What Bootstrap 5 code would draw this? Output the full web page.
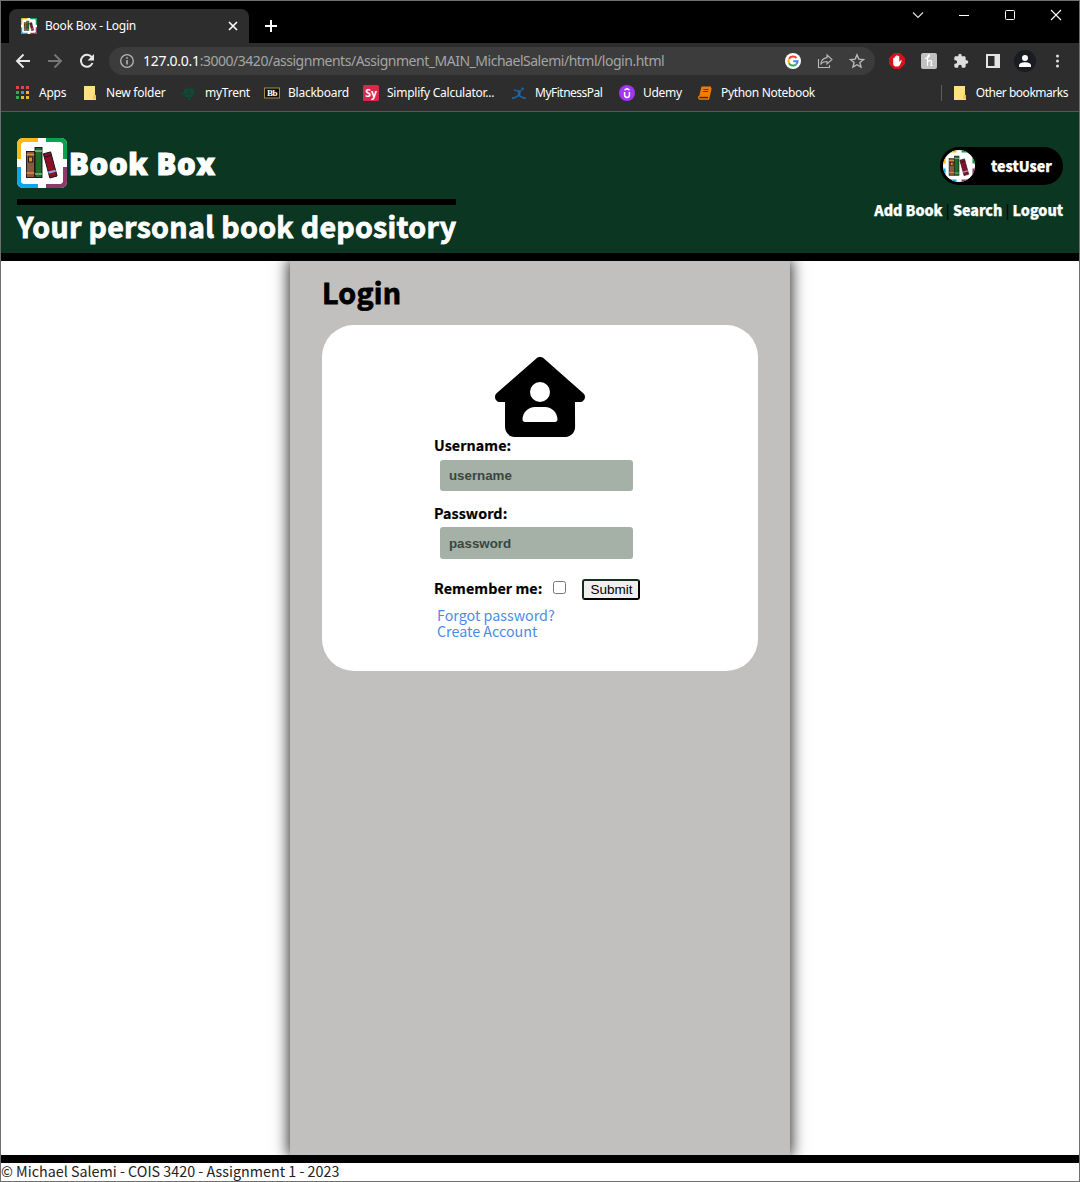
<!DOCTYPE html>
<html lang="en">
<head>
<meta charset="utf-8">
<title>Book Box - Login</title>
<link href="https://cdn.jsdelivr.net/npm/bootstrap@5.3.0/dist/css/bootstrap.min.css" rel="stylesheet">
<script src="https://cdn.jsdelivr.net/npm/bootstrap@5.3.0/dist/js/bootstrap.bundle.min.js"></script>
<style>
  body { margin: 0; background: #fff; color: #000; font-family: "Noto Sans CJK SC", "Noto Sans CJK JP", sans-serif; font-size: 14.3px; overflow: hidden; }
  svg { display: block; flex: none; }
  .win { width: 1080px; height: 1182px; border: 1px solid #6f6f6f; overflow: hidden; }
  .chrome-ui { font-family: "Noto Sans", "Open Sans", sans-serif; font-size: 12px; color: #fff; white-space: nowrap; }
  .tabstrip { height: 42px; background: #000; }
  .tab { width: 240px; height: 34px; margin: 8px 0 0 8px; background: #2d2d2d; border-radius: 8px 8px 0 0; padding: 0 10px 0 12px; }
  .tab-title { margin-left: 8px; letter-spacing: -.22px; }
  .newtab { margin: 19px 0 0 16px; }
  .winctl { gap: 34px; padding: 8px 17px 0 0; height: 20px; }
  .toolbar { height: 36px; background: #2d2d2d; }
  .nav-icons { gap: 16px; padding-left: 14px; width: 108px; }
  .omni { width: 766px; height: 28px; border-radius: 14px; background: #3c3c3c; padding: 0 10px; }
  .url { margin-left: 8px; font-size: 14px; line-height: 20px; margin-top: -1px; color: #a5a5a5; letter-spacing: -.48px; }
  .url b { color: #fff; font-weight: 400; letter-spacing: -.29px; }
  .ext { gap: 16px; margin-left: 14px; }
  .marks { height: 33px; background: #2d2d2d; border-bottom: 1px solid #55595a; padding-left: 14px; padding-bottom: 4px; letter-spacing: -.24px; }
  .bm { display: flex; align-items: center; gap: 8px; flex: none; }
  .w1 { width: 67px } .w2 { width: 99px } .w3 { width: 83px } .w4 { width: 99px } .w5 { width: 148px } .w6 { width: 108px; letter-spacing: -.5px } .w7 { width: 78px; letter-spacing: -.3px }
  .w8 { letter-spacing: -.32px }
  .others { margin-right: 11px; }
  .others .bm { margin-left: 10px; letter-spacing: -.48px; }
  .bm-sep { width: 1px; height: 16px; background: #5e5e5e; }
  .site-head { height: 149px; background: #0a3622; border-bottom: 8px solid #000; color: #fff; padding: 26px 16px 0; }
  .brand { font-family: "Open Sans", "Noto Sans", sans-serif; font-size: 29.5px; font-weight: 800; line-height: 52px; gap: 2px; height: 50px; }
  .brand-name { letter-spacing: .6px; -webkit-text-stroke: 1px #fff; }
  .rule { height: 6px; background: #000; margin-top: 11px; }
  .tagline { font-size: 28.6px; font-weight: 700; line-height: 36px; margin-top: 3px; white-space: nowrap; letter-spacing: .3px; -webkit-text-stroke: .8px #fff; }
  .userpill { margin-top: 9px; width: 123px; height: 38px; border-radius: 19px; background: #000; padding: 0 11px 0 3px; font-weight: 900; -webkit-text-stroke: .25px #fff; }
  .avatar { width: 32px; height: 32px; border-radius: 50%; overflow: hidden; }
  .links { margin-top: 13px; font-weight: 900; line-height: 23px; white-space: nowrap; letter-spacing: -.05px; -webkit-text-stroke: .25px #fff; }
  .links i { font-style: normal; font-weight: 400; color: #000; -webkit-text-stroke: 0; }
  .stage { height: 894px; overflow: hidden; }
  .panel { width: 500px; height: 894px; background: #c2c0be; box-shadow: 0 0 14px 2px rgba(0,0,0,.8); padding: 11px 32px 0; }
  .panel h1 { font-size: 28.6px; font-weight: 700; line-height: 40px; height: 40px; margin: 0 0 13px; letter-spacing: .25px; -webkit-text-stroke: .8px #000; }
  .login-card { height: 346px; border-radius: 32px; background: #fff; padding: 32px 112px 0; }
  .lbl { font-weight: 700; line-height: 16px; height: 18px; white-space: nowrap; letter-spacing: .08px; -webkit-text-stroke: .2px #000; }
  .remember { padding-bottom: 0; margin-bottom: 2px; }
  .field { display: block; width: 193px; border: 0; border-radius: 3px; background: #a5b0a6; margin-left: 6px; padding: 0 9px; font: bold 13.3px "Liberation Sans", Arial, sans-serif; }
  .field::placeholder { color: #38473e; opacity: 1; }
  .chk { width: 13px; height: 13px; margin: -5px 0 0 11px; border: 1px solid #767676; border-radius: 2.5px; background: #fff; appearance: none; }
  .go { width: 58px; height: 21px; margin-left: 16px; padding: 0; border: 2px solid #000; border-top-color: #12301c; border-left-color: #12301c; border-radius: 3px; background: #efefef; font: 13.5px/16px "Liberation Sans", Arial, sans-serif; }
  .more a { display: block; color: #4a8bea; text-decoration: none; line-height: 16px; }
  .foot { border-top: 8px solid #000; height: 27px; line-height: 16px; letter-spacing: .01px; color: #222; }
</style>
</head>
<body>
<svg width="0" height="0" class="position-absolute">
  <defs>
    <symbol id="books" viewBox="0 0 50 50">
      <clipPath id="rr"><rect width="50" height="50" rx="6"/></clipPath>
      <g clip-path="url(#rr)">
        <rect width="50" height="50" fill="#fff"/>
        <path d="M0 21V0h21v4H6L4 6v15z" fill="#fbb917"/>
        <path d="M29 0h21v21h-4V6l-2-2H29z" fill="#0aa24f"/>
        <path d="M0 29v21h21v-4H6l-2-2V29z" fill="#0ea5e9"/>
        <path d="M29 50h21V29h-4v15l-2 2H29z" fill="#8e3a68"/>
      </g>
      <g stroke="#111" stroke-width=".9">
        <rect x="9.500" y="13.500" width="8" height="26" fill="#8a5a3c"/>
        <path d="M9.500 16.500h8M9.500 35h8" stroke="#e0903f" stroke-width="1.500"/>
        <rect x="11.500" y="19" width="4.200" height="5" fill="#f08a1c"/>
        <rect x="18" y="9.500" width="7" height="30" fill="#1d6b2e"/>
        <path d="M18 13h7M18 36h7" stroke="#8bb48d" stroke-width="1.500"/>
        <g transform="rotate(-15 33 27)"><rect x="29.500" y="14.500" width="7.500" height="25" fill="#8c0f27"/>
        <path d="M29.500 34h7.500" stroke="#8fa4dd" stroke-width="2.200"/><path d="M29.500 18h7.500" stroke-width=".8"/></g>
      </g>
    </symbol>
    <symbol id="folder" viewBox="0 0 16 16"><path d="M2 1h11v9l1 1v4H2z" fill="#ffe083"/><path d="M11 14v-3.500l2-1 1 1V14z" fill="#f4c95a"/></symbol>
  </defs>
</svg>
<div class="win d-flex flex-column">
  <div class="chrome-ui flex-shrink-0">
    <div class="tabstrip d-flex">
      <div class="tab d-flex align-items-center">
        <svg width="16" height="16"><use href="#books"/></svg>
        <span class="tab-title">Book Box - Login</span>
        <svg class="ms-auto" width="12" height="12" viewBox="0 0 12 12" stroke="#fff" stroke-width="1.600"><path d="M2 2l8 8M10 2l-8 8"/></svg>
      </div>
      <svg class="newtab" width="12" height="12" viewBox="0 0 12 12" stroke="#fff" stroke-width="2"><path d="M6 0v12M0 6h12"/></svg>
      <div class="winctl d-flex align-items-center ms-auto">
        <svg width="12" height="12" viewBox="0 0 12 12" fill="none" stroke="#e5e5e5" stroke-width="1.100"><path d="M1 3.500l5 5 5-5"/></svg>
        <svg width="12" height="12" viewBox="0 0 12 12" stroke="#fff"><path d="M1 6.500h10"/></svg>
        <svg width="12" height="12" viewBox="0 0 12 12" fill="none" stroke="#fff"><rect x="1.500" y="1.500" width="9" height="9" rx="1"/></svg>
        <svg width="12" height="12" viewBox="0 0 12 12" stroke="#fff" stroke-width="1.100"><path d="M1 1l10 10M11 1L1 11"/></svg>
      </div>
    </div>
    <div class="toolbar d-flex align-items-center">
      <div class="nav-icons d-flex">
        <svg width="16" height="16" viewBox="0 0 16 16" fill="none" stroke="#e8e8e8" stroke-width="1.900"><path d="M15 8H2M8.500 1.500L2 8l6.500 6.500"/></svg>
        <svg width="16" height="16" viewBox="0 0 16 16" fill="none" stroke="#777" stroke-width="1.900"><path d="M1 8h13M7.500 1.500L14 8l-6.500 6.500"/></svg>
        <svg width="16" height="16" viewBox="0 0 16 16" fill="none" stroke="#e8e8e8" stroke-width="2"><path d="M13.500 10A6 6 0 1 1 12.600 4L14 5.500"/><path d="M15 1v6.500H8.500z" fill="#e8e8e8" stroke="none"/></svg>
      </div>
      <div class="omni d-flex align-items-center">
        <svg width="16" height="16" viewBox="0 0 16 16" fill="none" stroke="#b5b5b5" stroke-width="1.300"><circle cx="8" cy="8" r="6.300"/><path d="M8 7v4.500M8 4.200v1.600" stroke-width="1.600"/></svg>
        <span class="url"><b>127.0.0.1</b>:3000/3420/assignments/Assignment_MAIN_MichaelSalemi/html/login.html</span>
        <div class="d-flex gap-3 ms-auto">
          <svg width="16" height="16" viewBox="0 0 16 16" fill="none" stroke-width="2"><circle cx="8" cy="8" r="8" fill="#fff"/><path d="M11.500 5A4.600 4.600 0 0 0 4 5.800" stroke="#ea4335"/><path d="M4 5.800a4.600 4.600 0 0 0 0 4.400" stroke="#fbbc05"/><path d="M4 10.200a4.600 4.600 0 0 0 7 1.300" stroke="#34a853"/><path d="M11 11.500A4.600 4.600 0 0 0 12.600 8.200H8.200" stroke="#4285f4"/></svg>
          <svg width="16" height="16" viewBox="0 0 16 16" fill="none" stroke="#b8b8b8" stroke-width="1.100"><path d="M1.500 6v8.500h11V12M10 2l5 4.500-5 4.500V8.500c-3 0-5 1-6.300 3C4 7.500 6.500 5 10 4.600z"/></svg>
          <svg width="16" height="16" viewBox="0 0 16 16" fill="none" stroke="#b8b8b8" stroke-width="1.400"><path d="M8 1.800l1.800 4.300 4.700.4-3.600 3 1.100 4.600L8 11.700l-4 2.400 1.100-4.600-3.600-3 4.700-.4z"/></svg>
        </div>
      </div>
      <div class="ext d-flex">
        <svg width="16" height="16" viewBox="0 0 16 16"><path d="M5 0h6l5 5v6l-5 5H5l-5-5V5z" fill="#d8121c"/><path d="M4.200 8.500V5.500a.7.700 0 0 1 1.500 0V4a.7.700 0 0 1 1.500 0V3a.8.800 0 0 1 1.600 0v.8a.7.700 0 0 1 1.500 0V9l1.200-1.600c.7-.6 1.500 0 1.200.7l-1.800 4c-.4.900-1.200 1.500-2.300 1.500H7.500c-2.200 0-3.300-1.400-3.300-3.200z" fill="#fff"/></svg>
        <svg width="16" height="16" viewBox="0 0 16 16"><rect width="16" height="16" rx="2" fill="#c1c1c1"/><path d="M4 5.500c2-.5 4.500-1.500 4.500-3S6.500 2.500 6.500 5v8M6.500 9.500c1-2.500 4-3 4-.5 0 2-1.500 4 1 3.500" fill="none" stroke="#fff" stroke-width="1.200"/></svg>
        <svg width="16" height="16" viewBox="0 0 24 24" fill="#dedede"><path d="M20.500 11H19V7c0-1.100-.9-2-2-2h-4V3.500a2.500 2.500 0 0 0-5 0V5H4c-1.100 0-2 .9-2 2v3.800h1.500a2.700 2.700 0 0 1 0 5.400H2V20c0 1.100.9 2 2 2h3.800v-1.500a2.700 2.700 0 0 1 5.400 0V22H17c1.100 0 2-.9 2-2v-4h1.500a2.500 2.500 0 0 0 0-5z"/></svg>
        <svg width="16" height="16" viewBox="0 0 16 16"><path d="M1 1h14v14H1zM3 3v10h6.500V3z" fill="#e4e4e4" fill-rule="evenodd"/></svg>
        <svg width="16" height="16" viewBox="0 0 16 16" overflow="visible"><circle cx="8" cy="8" r="11" fill="#1b1c22"/><circle cx="8" cy="5" r="3" fill="#fff"/><path d="M2 14v-1.500C2 10 6 9.300 8 9.300s6 .7 6 3.200V14z" fill="#fff"/></svg>
        <svg width="16" height="16" viewBox="0 0 16 16" fill="#e0e0e0"><circle cx="8.500" cy="3" r="1.500"/><circle cx="8.500" cy="8" r="1.500"/><circle cx="8.500" cy="13" r="1.500"/></svg>
      </div>
    </div>
    <div class="marks d-flex align-items-center">
      <div class="bm w1"><svg width="16" height="16" viewBox="0 0 16 16"><path d="M1 1h3v3H1zM6 1h3v3H6zM11 1h3v3h-3z" fill="#e0483e"/><path d="M1 6h3v3H1zM1 11h3v3H1z" fill="#3fa45b"/><path d="M6 6h3v3H6z" fill="#4a8df0"/><path d="M11 6h3v3h-3zM6 11h3v3H6zM11 11h3v3h-3z" fill="#efb52e"/></svg>Apps</div>
      <div class="bm w2"><svg width="16" height="16"><use href="#folder"/></svg>New folder</div>
      <div class="bm w3"><svg width="16" height="16" viewBox="0 0 16 16"><path d="M8 1l2 3 3 0 0 3 2 2-3 1-1 2H9v3H7v-3H4l-1-2-3-1 3-2V4l3 0z" fill="#0e4b34"/><path d="M8 2v12M2 9h12" stroke="#2d2d2d" stroke-width=".6"/></svg>myTrent</div>
      <div class="bm w4"><svg width="16" height="16" viewBox="0 0 16 16"><rect x=".5" y="3" width="15" height="10" fill="#111" stroke="#a58a3a"/><text x="8" y="11.300" font-family="Liberation Serif, serif" font-weight="bold" font-size="9" text-anchor="middle" letter-spacing="-.5" fill="#fff">Bb</text></svg>Blackboard</div>
      <div class="bm w5"><svg width="16" height="16" viewBox="0 0 16 16"><rect width="16" height="16" rx="1.500" fill="#d9284a"/><text x="8" y="11.800" font-family="Open Sans, sans-serif" font-weight="bold" font-size="10.500" text-anchor="middle" fill="#fff">Sy</text></svg>Simplify Calculator...</div>
      <div class="bm w6"><svg width="16" height="16" viewBox="0 0 16 16" fill="none" stroke="#1769ac" stroke-width="1.500"><path d="M3 4.500c2 1.800 5 1.800 7.500 1M8 6v3.500C6.500 11.500 4.500 13 1 13.200M7.500 9.500c1.500 2 4 3.500 7.500 3.700"/><path d="M7 6h2.500v4H7z" fill="#1769ac" stroke="none"/><circle cx="11.500" cy="3.700" r="1.300" fill="#1769ac" stroke="none"/></svg>MyFitnessPal</div>
      <div class="bm w7"><svg width="16" height="16" viewBox="0 0 16 16" fill="none" stroke="#fff" stroke-width="1.500"><circle cx="8" cy="8" r="8" fill="#a435f0" stroke="none"/><path d="M5.600 7v3a2.400 2.400 0 0 0 4.800 0V7M5.500 5L8 3.500 10.500 5"/></svg>Udemy</div>
      <div class="bm w8"><svg width="16" height="16" viewBox="0 0 16 16"><path d="M4.500 1.500h9.700l-2.300 10.500H2z" fill="#f57c00"/><path d="M2.500 11c-1.200.8-1 3 .5 3h8.500L14 3" fill="none" stroke="#f57c00" stroke-width="1.400"/><path d="M6.500 4.500h5M6 6.500h5M2.800 12.300H11" stroke="#442a12" stroke-width=".8"/></svg>Python Notebook</div>
      <div class="others d-flex align-items-center ms-auto"><span class="bm-sep"></span><div class="bm"><svg width="16" height="16"><use href="#folder"/></svg>Other bookmarks</div></div>
    </div>
  </div>
  <header class="site-head d-flex justify-content-between flex-shrink-0">
    <div>
      <div class="brand d-flex"><svg width="50" height="50"><use href="#books"/></svg><span class="brand-name">Book Box</span></div>
      <div class="rule"></div>
      <div class="tagline">Your personal book depository</div>
    </div>
    <div class="d-flex flex-column align-items-end">
      <div class="userpill d-flex align-items-center justify-content-between"><span class="avatar"><svg width="32" height="32"><use href="#books"/></svg></span>testUser</div>
      <div class="links">Add Book <i>|</i> Search <i>|</i> Logout</div>
    </div>
  </header>
  <main class="stage flex-shrink-0">
    <section class="panel mx-auto">
      <h1>Login</h1>
      <form class="login-card">
        <svg class="mx-auto" width="90" height="80" viewBox="0 0 576 512"><path d="M575.800 255.500c0 18-15 32.100-32 32.100h-32l.7 160.200c.2 35.500-28.500 64.300-64 64.300H128.100c-35.300 0-64-28.700-64-64V287.600H32c-18 0-32-14-32-32.100 0-9 3-17 10-24L266.400 8c7-7 15-8 22-8s15 2 21 7l255.400 224.500c8 7 12 15 11 24zM352 224a64 64 0 1 0-128 0 64 64 0 1 0 128 0zm-96 96c-44.200 0-80 35.800-80 80 0 8.800 7.200 16 16 16h192c8.800 0 16-7.200 16-16 0-44.200-35.800-80-80-80z"/></svg>
        <div class="lbl">Username:</div>
        <input class="field" style="height:31px;margin-top:5px" placeholder="username">
        <div class="lbl" style="margin-top:14px">Password:</div>
        <input class="field" style="height:32px;margin-top:4px" placeholder="password">
        <div class="d-flex align-items-center" style="margin-top:20px;height:21px"><span class="lbl remember">Remember me:</span><input type="checkbox" class="chk"><button type="button" class="go">Submit</button></div>
        <div class="more" style="margin:7px 0 0 3px"><a href="#">Forgot password?</a><a href="#">Create Account</a></div>
      </form>
    </section>
  </main>
  <footer class="foot flex-shrink-0">© Michael Salemi - COIS 3420 - Assignment 1 - 2023</footer>
</div>
</body>
</html>
